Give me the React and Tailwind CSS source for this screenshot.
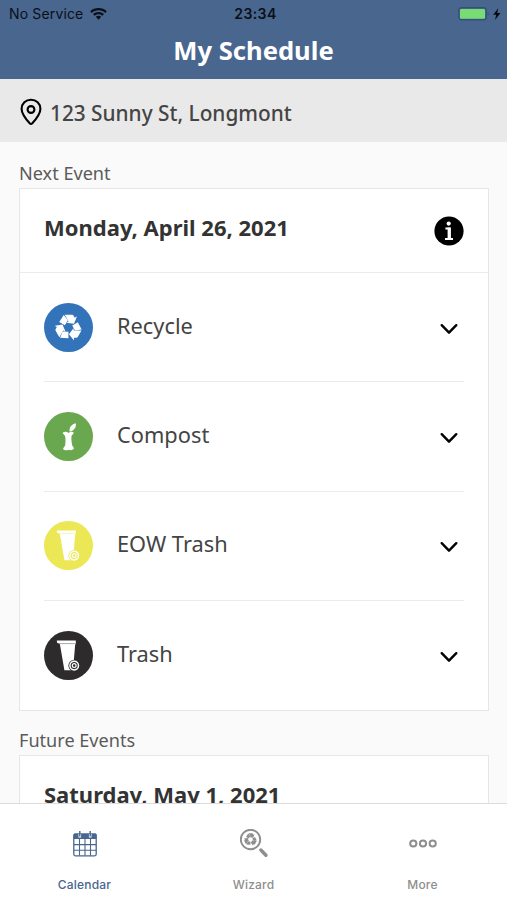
import React, { useState } from 'react'
import clsx from 'clsx'

const RecycleIcon = ({ className }) => (
  <svg className={className} viewBox="-13 -13 26 26" fill="currentColor">
    {[0, 120, 240].map(angle => (
      <g key={angle} transform={`rotate(${angle})`}>
        <path d="M-4.600-12-8.900-5.200-3.500-2.100-.6-6.900z" />
        <path d="M-3.700-12.300h6.900c.9 0 1.400.4 1.800 1.100l1 1.700 2.200-1.300-2.900 7.200-7.400-.9 2.200-1.300z" />
      </g>
    ))}
  </svg>
)

const AppleCoreIcon = () => (
  <svg className="size-[49px]" viewBox="0 0 49 49" fill="#fff">
    <path d="M25.600 19.300c-.4-3.800 1.400-6.600 6.200-8 .7 4.300-2 7.200-5.200 8.300z" />
    <path d="M18.600 20.800c2.200-1.400 4.400-1.200 6 .1 1.600-1.300 3.400-1.500 5.200-.5-.2 1.700-2 2.300-2.300 3.800-.4 3 .2 5.800.5 8.300.3 1.700 1.600 2.500 2 4-1.400 1.800-3.200 2.100-5.200 1.300-2 .9-4.200.8-5.700-.9.3-1.600 1.900-2.400 2.100-4.200.3-2.500.5-5.500 0-8.200-.4-1.700-2.100-2-2.600-3.700z" />
  </svg>
)

const BinIcon = ({ color }) => (
  <svg className="size-[49px]" viewBox="0 0 49 49" fill="none">
    <path fill="#fff" d="M12.900 9.600h18.900v3.600h-.6L29 39.200h-8.600L15.900 13.200l-3-1.800z" />
    <path stroke={color} strokeOpacity=".5" strokeWidth=".8" d="M14.500 12.600h17" />
    <circle cx="30.200" cy="34.600" r="5.800" fill={color} />
    <circle cx="30.200" cy="34.600" r="4.300" stroke="#fff" strokeWidth="1.500" />
    <circle cx="30.200" cy="34.600" r="1.900" stroke="#fff" strokeWidth="1.200" />
  </svg>
)

const PinIcon = () => (
  <svg
    className="mt-0.5 h-7 w-[22px]"
    viewBox="0 0 22 28"
    fill="none"
    stroke="#000"
    strokeWidth="2.100"
    strokeLinejoin="round"
  >
    <path d="M11 1.700c5.300 0 9.400 4 9.400 9.200 0 5.300-4.800 10.700-8.300 14.600-.7.700-1.500.7-2.200 0C6.400 21.600 1.600 16.200 1.600 10.900c0-5.200 4.100-9.200 9.400-9.200z" />
    <circle cx="11" cy="11.500" r="3.400" />
  </svg>
)

const InfoIcon = () => (
  <svg className="size-[30px]" viewBox="0 0 30 30">
    <circle cx="15" cy="15" r="14.600" />
    <circle cx="14.700" cy="7.600" r="2.100" fill="#fff" />
    <path fill="none" stroke="#fff" strokeWidth="2" d="M11.400 12.600h4.200v10.300M11 22.900h8" />
    <path stroke="#fff" strokeWidth="3.200" d="M15.200 11.600v11.300" />
  </svg>
)

const ChevronIcon = () => (
  <svg
    className="h-3 w-[18px]"
    viewBox="0 0 18 12"
    fill="none"
    stroke="#000"
    strokeWidth="2.400"
    strokeLinecap="round"
    strokeLinejoin="round"
  >
    <path d="M1.700 2.200 9 9.700l7.300-7.500" />
  </svg>
)

const WifiIcon = () => (
  <svg className="h-3 w-[17px]" viewBox="0 0 17 12" fill="#0a0f18">
    <path d="M8.500 0C5.300 0 2.400 1.200.2 3.200l1.500 1.700c1.800-1.600 4.200-2.600 6.800-2.600s5 1 6.800 2.600l1.500-1.700C14.600 1.200 11.700 0 8.500 0z" />
    <path d="M8.500 3.900c-2.100 0-4 .8-5.500 2.200l1.500 1.700c1.100-1 2.500-1.600 4-1.600s2.900.6 4 1.600L14 6.100c-1.500-1.400-3.400-2.200-5.500-2.200z" />
    <path d="M8.500 7.800c-1 0-2 .4-2.700 1l2.700 3 2.700-3c-.7-.6-1.700-1-2.700-1z" />
  </svg>
)

const BatteryIcon = () => (
  <svg className="h-[14px] w-[44px]" viewBox="0 0 44 14">
    <rect x=".7" y=".7" width="27.600" height="12.200" rx="2.800" fill="none" stroke="#34507a" strokeWidth="1.200" />
    <rect x="2" y="2" width="25" height="9.700" rx="1.300" fill="#77dc73" />
    <path fill="#34507a" d="M29.700 4.700c1.300.5 1.300 3.700 0 4.200z" />
    <path fill="#05080e" d="M40.300 1.200 35.200 7.700h3.100l-1.300 5.200 5.400-6.900h-3.300z" />
  </svg>
)

const CalendarIcon = () => (
  <svg className="h-[27px] w-6" viewBox="0 0 24 27" fill="none" stroke="currentColor">
    <rect x=".8" y="4.200" width="22.400" height="21.600" rx="1.500" strokeWidth="1.300" />
    <path fill="currentColor" d="M1 4h22v4.500H1z" />
    <path
      strokeWidth="1.100"
      d="M1 14.600h22M1 20.200h22M6.500 9v16.500M12 9v16.500M17.500 9v16.500"
    />
    <path stroke="#fff" strokeWidth="2.600" d="M6.800 4v3.500M17.200 4v3.500" />
    <path strokeWidth="1.400" d="M6.800 1v5.500M17.200 1v5.500" />
  </svg>
)

const WizardIcon = () => (
  <span className="relative block size-7">
    <svg className="size-7" viewBox="0 0 28 28" fill="none" stroke="currentColor">
      <circle cx="10.500" cy="10.500" r="9.700" strokeWidth="1.900" />
      <path strokeWidth="3.400" strokeLinecap="round" d="m20.900 21 5 5.200" />
    </svg>
    <RecycleIcon className="absolute left-[4px] top-[4px] size-[13px]" />
  </span>
)

const MoreIcon = () => (
  <svg className="h-[9px] w-7" viewBox="0 0 28 9" fill="none" stroke="currentColor" strokeWidth="2">
    <circle cx="4.300" cy="4.500" r="3.100" />
    <circle cx="14" cy="4.500" r="3.100" />
    <circle cx="23.700" cy="4.500" r="3.100" />
  </svg>
)

const services = [
  {
    name: 'Recycle',
    bg: 'bg-[#3273b9]',
    icon: <RecycleIcon className="size-[27px] text-white" />
  },
  { name: 'Compost', bg: 'bg-[#6aa84f]', icon: <AppleCoreIcon /> },
  { name: 'EOW Trash', bg: 'bg-[#ebe755]', icon: <BinIcon color="#ebe755" /> },
  { name: 'Trash', bg: 'bg-[#2d2b2c]', icon: <BinIcon color="#2d2b2c" /> }
]

const tabs = [
  { name: 'Calendar', icon: <CalendarIcon /> },
  { name: 'Wizard', icon: <WizardIcon /> },
  { name: 'More', icon: <MoreIcon /> }
]

const StatusBar = () => (
  <div className="grid h-7 grid-cols-3 items-center pl-[9px] pr-[5px] font-['Inter',sans-serif] text-sm text-[#0a0f18]">
    <div className="flex items-center gap-[7px]">
      <span className="tracking-[0.15px]">No Service</span>
      <WifiIcon />
    </div>
    <span className="text-center font-semibold tracking-[0.4px]">23:34</span>
    <div className="flex justify-end">
      <BatteryIcon />
    </div>
  </div>
)

const SectionLabel = ({ children }) => (
  <h2 className="pl-[19px] text-[18.1px] leading-6 text-[#5b5b5b]">{children}</h2>
)

const EventCard = ({ date, info, className, children }) => (
  <section
    className={clsx('ml-[19px] mr-[18px] border border-[#e6e6e6] bg-white', className)}
  >
    <div className="flex h-[84px] items-center justify-between border-b border-[#ebebeb] px-6">
      <span className="pb-[7px] text-[22px] font-bold leading-[30px] text-[#333]">
        {date}
      </span>
      {info && <InfoIcon />}
    </div>
    {children}
  </section>
)

function App() {
  const [activeTab, setActiveTab] = useState('Calendar')

  return (
    <div className="flex h-[900px] w-[507px] flex-col overflow-hidden bg-[#fafafa] font-['Noto_Sans',sans-serif]">
      <header className="h-[79px] shrink-0 bg-[#48668e]">
        <StatusBar />
        <h1 className="text-center text-[25.6px] font-bold leading-[46px] text-white">
          My Schedule
        </h1>
      </header>
      <div className="flex h-[63px] shrink-0 items-center gap-2 bg-[#e9e9e9] pl-5">
        <PinIcon />
        <span className="pt-[5px] text-[20.8px] font-medium leading-7 text-[#444]">
          123 Sunny St, Longmont
        </span>
      </div>
      <main className="min-h-0 flex-1 overflow-hidden pt-[19px]">
        <SectionLabel>Next Event</SectionLabel>
        <EventCard date="Monday, April 26, 2021" info className="mt-[3px] h-[523px]">
          <ul className="px-6">
            {services.map(({ name, bg, icon }) => (
              <li
                className="flex h-[109.4px] items-center border-b border-[#ebebeb] last:border-0"
                key={name}
              >
                <span
                  className={clsx(
                    'flex size-[49px] items-center justify-center rounded-full',
                    bg
                  )}
                >
                  {icon}
                </span>
                <span className="flex-1 pb-[3px] pl-6 text-[21.8px] leading-[30px] text-[#444]">
                  {name}
                </span>
                <button className="mr-1.5 mt-[3px]">
                  <ChevronIcon />
                </button>
              </li>
            ))}
          </ul>
        </EventCard>
        <div className="mt-[17px]">
          <SectionLabel>Future Events</SectionLabel>
        </div>
        <EventCard date="Saturday, May 1, 2021" className="mt-[3px]" />
      </main>
      <nav className="grid h-[97px] shrink-0 grid-cols-3 border-t border-[#dcdcdc] bg-white">
        {tabs.map(({ name, icon }) => (
          <button
            className={clsx(
              'flex flex-col items-center',
              name === activeTab ? 'text-[#48668e]' : 'text-[#8e8e8e]'
            )}
            key={name}
            onClick={() => setActiveTab(name)}
          >
            <span className="flex h-[78px] items-center">{icon}</span>
            <span className="-mt-[5px] font-['Inter',sans-serif] text-xs font-medium leading-4 tracking-[0.2px]">
              {name}
            </span>
          </button>
        ))}
      </nav>
    </div>
  )
}

export default App
